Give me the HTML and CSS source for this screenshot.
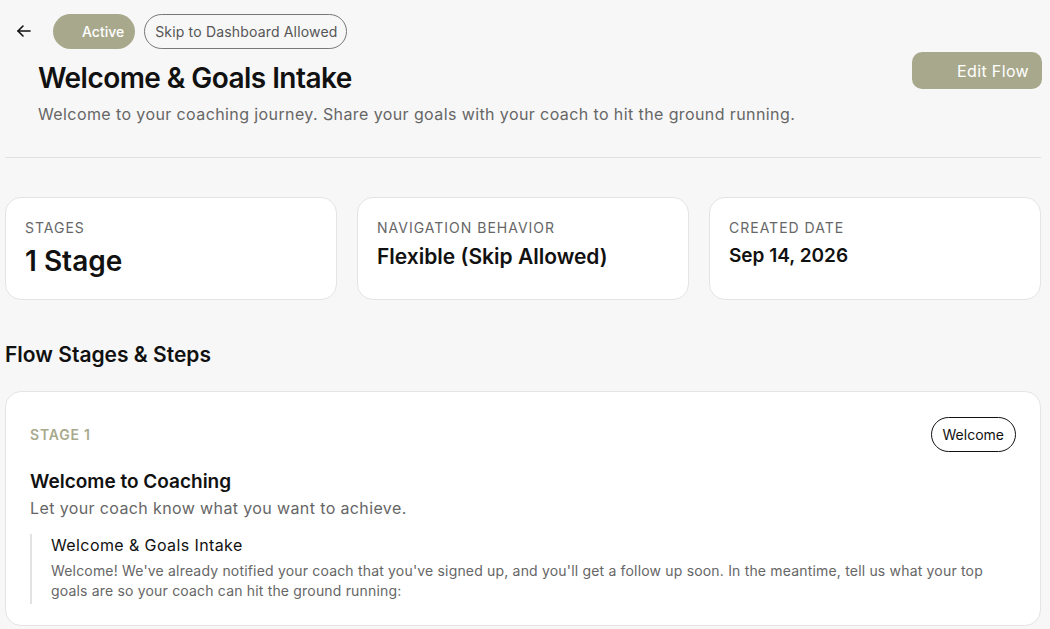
FILE: index.html
```html
<!DOCTYPE html>
<html lang="en">
<head>
    <meta charset="UTF-8">
    <meta name="viewport" content="width=device-width, initial-scale=1.0">
    <title>Welcome &amp; Goals Intake</title>
    <link rel="stylesheet" href="styles.css">
</head>
<body>
    <div class="page">
        <!-- Header -->
        <header class="flow-header">
            <div class="top-row">
                <button class="back-btn" aria-label="Back">
                    <svg width="16" height="16" viewBox="0 0 16 16" fill="none" stroke="#111" stroke-width="1.6" stroke-linecap="round" stroke-linejoin="round">
                        <path d="M14 8H2"/>
                        <path d="M7 3L2 8l5 5"/>
                    </svg>
                </button>
                <span class="pill pill-active">Active</span>
                <span class="pill pill-outline">Skip to Dashboard Allowed</span>
            </div>
            <div class="title-row">
                <div class="title-block">
                    <h1>Welcome &amp; Goals Intake</h1>
                    <p class="subtitle">Welcome to your coaching journey. Share your goals with your coach to hit the ground running.</p>
                </div>
                <button class="edit-btn">Edit Flow</button>
            </div>
        </header>

        <hr class="divider">

        <!-- Stats -->
        <section class="stats">
            <div class="stat-card">
                <div class="stat-label">Stages</div>
                <div class="stat-value big">1 Stage</div>
            </div>
            <div class="stat-card">
                <div class="stat-label">Navigation Behavior</div>
                <div class="stat-value">Flexible (Skip Allowed)</div>
            </div>
            <div class="stat-card">
                <div class="stat-label">Created Date</div>
                <div class="stat-value small">Sep 14, 2026</div>
            </div>
        </section>

        <!-- Stages -->
        <h2 class="section-title">Flow Stages &amp; Steps</h2>

        <section class="stage-card">
            <div class="stage-head">
                <span class="stage-num">Stage 1</span>
                <span class="stage-tag">Welcome</span>
            </div>
            <h3 class="stage-title">Welcome to Coaching</h3>
            <p class="stage-desc">Let your coach know what you want to achieve.</p>

            <div class="step">
                <div class="step-title">Welcome &amp; Goals Intake</div>
                <p class="step-desc">Welcome! We've already notified your coach that you've signed up, and you'll get a follow up soon. In the meantime, tell us what your top goals are so your coach can hit the ground running:</p>
            </div>
        </section>
    </div>
</body>
</html>
```

FILE: styles.css
```css
/* General body styling */
body {
    margin: 0;
    font-family: Inter, "Noto Sans", Arial, sans-serif;
    background-color: #f7f7f7;
    color: #111;
}

.page {
    padding: 13px 9px 0 5px;
}

/* Header */
.top-row {
    display: flex;
    align-items: center;
    gap: 9px;
}

.back-btn {
    width: 36px;
    height: 36px;
    margin-left: 1px;
    margin-right: 2px;
    border: none;
    background: none;
    padding: 0;
    display: flex;
    align-items: center;
    justify-content: center;
    cursor: pointer;
}

.pill {
    box-sizing: border-box;
    height: 35px;
    display: inline-flex;
    align-items: center;
    border-radius: 18px;
    font-size: 14px;
}

.pill-active {
    background-color: #a8a98c;
    color: #fff;
    padding: 0 11px 0 29px;
    font-weight: 500;
}

.pill-outline {
    border: 1px solid #777;
    color: #555;
    padding: 0 9px 0 10px;
    letter-spacing: 0.17px;
}

.title-row {
    display: flex;
    justify-content: space-between;
    align-items: flex-start;
}

.title-block {
    padding-left: 33px;
}

h1 {
    margin: 12px 0 0;
    font-size: 28px;
    font-weight: 600;
    letter-spacing: -0.55px;
    line-height: 34px;
}

.subtitle {
    margin: 8px 0 0;
    font-size: 16px;
    color: #666;
    line-height: 22px;
    letter-spacing: 0.4px;
}

.edit-btn {
    margin-top: 3px;
    margin-right: -1px;
    width: 130px;
    height: 37px;
    border: none;
    border-radius: 10px;
    background-color: #a8a98c;
    color: #fff;
    font-family: inherit;
    font-size: 16px;
    letter-spacing: 0.35px;
    text-align: right;
    padding: 0 13px 0 0;
    cursor: pointer;
}

.divider {
    border: none;
    border-top: 1px solid #e2e2e2;
    margin: 32px 0 0;
}

/* Stats cards */
.stats {
    display: grid;
    grid-template-columns: repeat(3, 1fr);
    gap: 20px;
    margin-top: 39px;
}

.stat-card {
    box-sizing: border-box;
    height: 103px;
    background-color: #fff;
    border: 1px solid #e4e4e4;
    border-radius: 16px;
    padding: 21px 19px;
}

.stat-label {
    font-size: 14px;
    color: #666;
    text-transform: uppercase;
    letter-spacing: 1px;
    line-height: 17px;
}

.stat-value {
    margin-top: 8px;
    font-size: 21px;
    font-weight: 600;
    line-height: 26px;
}

.stat-value.big {
    margin-top: 8px;
    font-size: 28px;
    line-height: 34px;
}

.stat-value.small {
    margin-top: 8px;
    font-size: 19px;
    line-height: 24px;
}

/* Stages section */
.section-title {
    margin: 42px 0 0;
    font-size: 21px;
    font-weight: 600;
    line-height: 26px;
}

.stage-card {
    margin-top: 23px;
    background-color: #fff;
    border: 1px solid #e4e4e4;
    border-radius: 16px;
    padding: 25px 24px 21px 24px;
}

.stage-head {
    display: flex;
    justify-content: space-between;
    align-items: center;
}

.stage-num {
    font-size: 14px;
    font-weight: 600;
    color: #a8a98c;
    text-transform: uppercase;
    letter-spacing: 0.8px;
}

.stage-tag {
    box-sizing: border-box;
    height: 35px;
    display: inline-flex;
    align-items: center;
    padding: 0 11px;
    border: 1px solid #111;
    border-radius: 18px;
    font-size: 14px;
}

.stage-title {
    margin: 17px 0 0;
    font-size: 19px;
    font-weight: 600;
    line-height: 26px;
}

.stage-desc {
    margin: 2px 0 0;
    font-size: 16px;
    color: #666;
    line-height: 22px;
    letter-spacing: 0.38px;
}

.step {
    margin-top: 15px;
    border-left: 2px solid #e2e2e2;
    padding: 1px 0 3px 19px;
}

.step-title {
    font-size: 16px;
    line-height: 20px;
    letter-spacing: 0.4px;
}

.step-desc {
    margin: 6px 0 0;
    font-size: 14px;
    color: #666;
    line-height: 20px;
    letter-spacing: 0.18px;
    max-width: 945px;
}
```
